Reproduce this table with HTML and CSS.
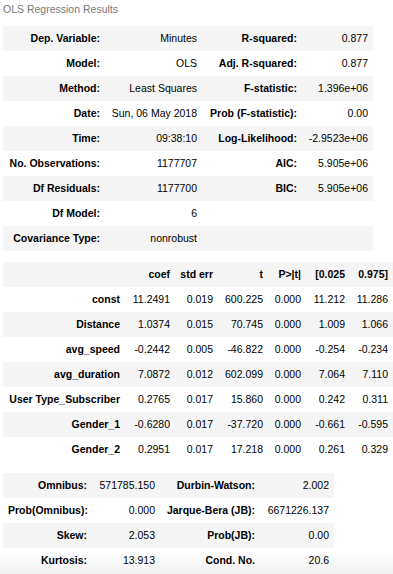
FILE: index.html
```html
<!DOCTYPE html>
<html>
<head>
<meta charset="utf-8">
<link rel="stylesheet" href="styles.css">
</head>
<body>
<div class="output">
  <table class="simpletable t1">
    <caption>OLS Regression Results</caption>
    <colgroup><col class="c1a"><col class="c1b"><col class="c1c"><col class="c1d"></colgroup>
    <tr><th>Dep. Variable:</th><td>Minutes</td><th>R-squared:</th><td>0.877</td></tr>
    <tr><th>Model:</th><td>OLS</td><th>Adj. R-squared:</th><td>0.877</td></tr>
    <tr><th>Method:</th><td>Least Squares</td><th>F-statistic:</th><td>1.396e+06</td></tr>
    <tr><th>Date:</th><td>Sun, 06 May 2018</td><th>Prob (F-statistic):</th><td>0.00</td></tr>
    <tr><th>Time:</th><td>09:38:10</td><th>Log-Likelihood:</th><td>-2.9523e+06</td></tr>
    <tr><th>No. Observations:</th><td>1177707</td><th>AIC:</th><td>5.905e+06</td></tr>
    <tr><th>Df Residuals:</th><td>1177700</td><th>BIC:</th><td>5.905e+06</td></tr>
    <tr><th>Df Model:</th><td>6</td><th></th><td></td></tr>
    <tr><th>Covariance Type:</th><td>nonrobust</td><th></th><td></td></tr>
  </table>

  <table class="simpletable t2">
    <colgroup><col class="c2a"><col class="c2b"><col class="c2c"><col class="c2d"><col class="c2e"><col class="c2f"><col class="c2g"></colgroup>
    <tr><td></td><th>coef</th><th>std err</th><th>t</th><th>P&gt;|t|</th><th>[0.025</th><th>0.975]</th></tr>
    <tr><th>const</th><td>11.2491</td><td>0.019</td><td>600.225</td><td>0.000</td><td>11.212</td><td>11.286</td></tr>
    <tr><th>Distance</th><td>1.0374</td><td>0.015</td><td>70.745</td><td>0.000</td><td>1.009</td><td>1.066</td></tr>
    <tr><th>avg_speed</th><td>-0.2442</td><td>0.005</td><td>-46.822</td><td>0.000</td><td>-0.254</td><td>-0.234</td></tr>
    <tr><th>avg_duration</th><td>7.0872</td><td>0.012</td><td>602.099</td><td>0.000</td><td>7.064</td><td>7.110</td></tr>
    <tr><th>User Type_Subscriber</th><td>0.2765</td><td>0.017</td><td>15.860</td><td>0.000</td><td>0.242</td><td>0.311</td></tr>
    <tr><th>Gender_1</th><td>-0.6280</td><td>0.017</td><td>-37.720</td><td>0.000</td><td>-0.661</td><td>-0.595</td></tr>
    <tr><th>Gender_2</th><td>0.2951</td><td>0.017</td><td>17.218</td><td>0.000</td><td>0.261</td><td>0.329</td></tr>
  </table>

  <table class="simpletable t3">
    <colgroup><col class="c3a"><col class="c3b"><col class="c3c"><col class="c3d"></colgroup>
    <tr><th>Omnibus:</th><td>571785.150</td><th>Durbin-Watson:</th><td>2.002</td></tr>
    <tr><th>Prob(Omnibus):</th><td>0.000</td><th>Jarque-Bera (JB):</th><td>6671226.137</td></tr>
    <tr><th>Skew:</th><td>2.053</td><th>Prob(JB):</th><td>0.00</td></tr>
    <tr><th>Kurtosis:</th><td>13.913</td><th>Cond. No.</th><td>20.6</td></tr>
  </table>
</div>
<div class="scroll-shadow"></div>
</body>
</html>
```

FILE: styles.css
```css
html, body {
  margin: 0;
  padding: 0;
  background: #ffffff;
  overflow: hidden;
}

body {
  font-family: "Liberation Sans", Arial, Helvetica, sans-serif;
  font-size: 10.5px;
  color: #000000;
  width: 393px;
  height: 574px;
  position: relative;
}

.output {
  display: flex;
  flex-direction: column;
  align-items: flex-start;
  gap: 11px;
  padding-left: 3px;
}

.simpletable {
  border-collapse: collapse;
  border-spacing: 0;
  table-layout: fixed;
}

.simpletable caption {
  caption-side: top;
  text-align: left;
  color: #777777;
  font-weight: normal;
  line-height: 16px;
  padding: 1px 0 9px 0;
  white-space: nowrap;
}

.simpletable tr {
  height: 25px;
}

.simpletable tr:nth-child(odd) {
  background: #f5f5f5;
}

.simpletable th,
.simpletable td {
  padding: 0 5px;
  line-height: 25px;
  text-align: right;
  vertical-align: middle;
  white-space: nowrap;
  border: none;
  overflow: visible;
}

.simpletable th {
  font-weight: bold;
}

.simpletable td {
  font-weight: normal;
}

/* table 1 */
.t1 { width: 370px; }
.c1a { width: 102px; }
.c1b { width: 97px; }
.c1c { width: 100px; }
.c1d { width: 71px; }

/* table 2 */
.t2 { width: 390px; }
.c2a { width: 122px; }
.c2b { width: 50px; }
.c2c { width: 43px; }
.c2d { width: 50px; }
.c2e { width: 38px; }
.c2f { width: 44px; }
.c2g { width: 43px; }

/* table 3 */
.t3 { width: 331px; }
.c3a { width: 89px; }
.c3b { width: 68px; }
.c3c { width: 100px; }
.c3d { width: 74px; }

.scroll-shadow {
  position: absolute;
  left: 0;
  right: 0;
  bottom: 0;
  height: 24px;
  background: linear-gradient(to bottom, rgba(0, 0, 0, 0), rgba(0, 0, 0, 0.05));
  pointer-events: none;
}
```
